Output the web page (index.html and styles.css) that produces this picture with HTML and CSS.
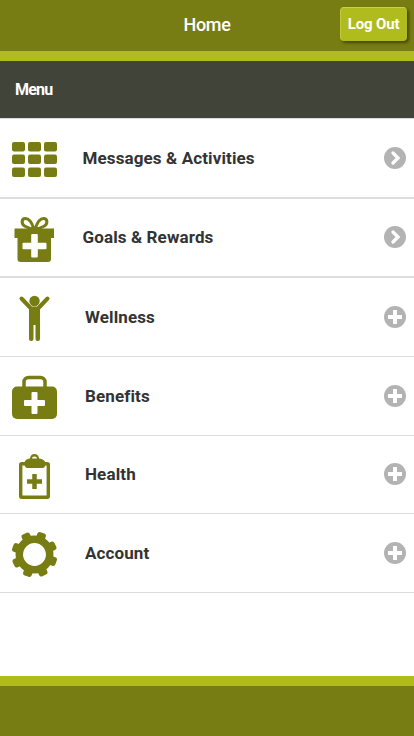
FILE: index.html
```html
<!DOCTYPE html>
<html lang="en">
<head>
<meta charset="utf-8">
<title>Home</title>
<link rel="stylesheet" href="styles.css">
</head>
<body>
<svg width="0" height="0" class="defs">
  <defs>
    <symbol id="go" viewBox="0 0 22 22"><circle cx="11" cy="11" r="11" fill="#b3b3b3"/><path d="M9 6l5 5-5 5" fill="none" stroke="#fff" stroke-width="3.300" stroke-linecap="round"/></symbol>
    <symbol id="expand" viewBox="0 0 22 22"><circle cx="11" cy="11" r="11" fill="#b3b3b3"/><path d="M11 4v14M4 11h14" stroke="#fff" stroke-width="4"/></symbol>
  </defs>
</svg>
<header class="top">
  <span></span>
  <h1>Home</h1>
  <button class="logout">Log Out</button>
</header>
<h2 class="menu-title">Menu</h2>
<main>
  <a class="row link first">
    <svg class="icon" viewBox="0 0 69 78"><g fill="#787d13"><rect x="12" y="23" width="13" height="9.5" rx="2"/><rect x="28" y="23" width="13" height="9.5" rx="2"/><rect x="44" y="23" width="13" height="9.5" rx="2"/><rect x="12" y="35.5" width="13" height="9.5" rx="2"/><rect x="28" y="35.5" width="13" height="9.5" rx="2"/><rect x="44" y="35.5" width="13" height="9.5" rx="2"/><rect x="12" y="48.5" width="13" height="9.5" rx="2"/><rect x="28" y="48.5" width="13" height="9.5" rx="2"/><rect x="44" y="48.5" width="13" height="9.5" rx="2"/></g></svg>
    <span class="label">Messages &amp; Activities</span>
    <svg class="mark"><use href="#go"/></svg>
  </a>
  <a class="row link">
    <svg class="icon" viewBox="0 0 69 77"><path d="M14.500 29.500h39.500v9.500h-3v21a3 3 0 0 1-3 3H20.500a3 3 0 0 1-3-3V39h-3z" fill="#787d13"/><path d="M34 30C32 24 29 19.500 25.500 19.500c-4.500 0-4.500 6 0 8 3 1.500 6 2.500 8.500 2.500zM35 30c2-6 5-10.500 8.500-10.500 4.500 0 4.500 6 0 8-3 1.500-6 2.500-8.500 2.500z" fill="none" stroke="#787d13" stroke-width="3"/><g fill="#fff"><rect x="31.200" y="35" width="6.600" height="23.500" rx="1"/><rect x="22.500" y="43.700" width="24" height="6.600" rx="1"/></g></svg>
    <span class="label odd">Goals &amp; Rewards</span>
    <svg class="mark odd"><use href="#go"/></svg>
  </a>
  <a class="row">
    <svg class="icon" viewBox="0 0 69 78"><circle cx="34.500" cy="23" r="5.200" fill="#787d13"/><path d="M21.500 20.500L31 30.500h7L47.500 20.500" fill="none" stroke="#787d13" stroke-width="4" stroke-linecap="round" stroke-linejoin="round"/><path d="M29 29h11v32a2 2 0 0 1-2 2h-.5a2 2 0 0 1-2-2V47h-2v14a2 2 0 0 1-2 2H31a2 2 0 0 1-2-2z" fill="#787d13"/></svg>
    <span class="label">Wellness</span>
    <svg class="mark"><use href="#expand"/></svg>
  </a>
  <a class="row">
    <svg class="icon" viewBox="0 0 69 78"><rect x="12" y="29.500" width="45" height="32.500" rx="5" fill="#787d13"/><path d="M24 31v-6a4.500 4.500 0 0 1 4.500-4.500h12a4.500 4.500 0 0 1 4.500 4.500V31" fill="none" stroke="#787d13" stroke-width="3.500"/><g fill="#fff"><rect x="31.500" y="35" width="6" height="22" rx="1"/><rect x="24" y="43" width="21" height="6" rx="1"/></g></svg>
    <span class="label">Benefits</span>
    <svg class="mark"><use href="#expand"/></svg>
  </a>
  <a class="row short">
    <svg class="icon" viewBox="0 0 69 77"><rect x="20.700" y="27.700" width="27.600" height="33.600" rx="1" fill="none" stroke="#787d13" stroke-width="3.400"/><path d="M24.500 28c0-4 2-5 5.500-5.500 0-2.500 2-4.500 4.500-4.500s4.500 2 4.500 4.500c3.500.5 6.500 1.500 6.500 5.500 0 2-1 4-3 4H27.500c-2 0-3-2-3-4z" fill="#787d13"/><path d="M32 22.500a2.500 2 0 0 1 5 0z" fill="#fff"/><path d="M34.500 38v15M27 45.500h15" stroke="#787d13" stroke-width="4.500"/></svg>
    <span class="label odd">Health</span>
    <svg class="mark odd"><use href="#expand"/></svg>
  </a>
  <a class="row">
    <svg class="icon" viewBox="0 0 69 78"><g transform="translate(34.500 40.500)"><circle r="15.200" fill="none" stroke="#787d13" stroke-width="7.500"/><g fill="#787d13" transform="rotate(20)"><rect x="-4.500" y="-23" width="9" height="46" rx="2.500" id="tooth" mask="url(#hub)"/><use href="#tooth" transform="rotate(45)"/><use href="#tooth" transform="rotate(90)"/><use href="#tooth" transform="rotate(135)"/></g></g><mask id="hub" maskUnits="userSpaceOnUse" x="-24" y="-24" width="48" height="48"><rect x="-24" y="-24" width="48" height="48" fill="#fff"/><circle r="12" fill="#000"/></mask></svg>
    <span class="label">Account</span>
    <svg class="mark"><use href="#expand"/></svg>
  </a>
</main>
<footer></footer>
</body>
</html>
```

FILE: styles.css
```css
* { box-sizing: border-box; }
body {
  margin: 0;
  height: 736px;
  display: flex;
  flex-direction: column;
  background: #fff;
  color: #333;
  font-family: Roboto, "Liberation Sans", sans-serif;
  overflow: hidden;
}
.defs { position: absolute; }
.top {
  height: 61px;
  flex: none;
  display: grid;
  grid-template-columns: 1fr auto 1fr;
  align-items: start;
  background: #787d13;
  border-bottom: 10px solid #b0bb1e;
  color: #fff;
}
h1 {
  margin: 0;
  font-size: 18px;
  line-height: 50px;
  font-weight: 500;
  letter-spacing: -0.3px;
}
.logout {
  justify-self: end;
  width: 67px;
  height: 34px;
  margin: 7px 7px 0 0;
  padding: 0;
  border: 1px solid #b0bb1e;
  border-top-color: #c9d14c;
  border-left-color: #c0c93a;
  border-radius: 4px;
  background: #b0bb1e;
  box-shadow: 2px 2px 3px #454a05;
  color: #fff;
  font: 700 15px Roboto, "Liberation Sans", sans-serif;
  letter-spacing: -0.15px;
}
.menu-title {
  flex: none;
  margin: 0;
  height: 57px;
  padding-left: 15px;
  background: #404439;
  color: #fff;
  font-size: 16px;
  line-height: 57px;
  font-weight: 700;
  letter-spacing: -0.8px;
}
.row {
  display: flex;
  align-items: center;
  height: 79px;
  border-bottom: 1px solid #ddd;
}
.link { border-bottom-width: 2px; }
.first { height: 81px; border-top: 1px solid #ddd; }
.short { height: 78px; }
.icon { width: 69px; height: 100%; flex: none; }
.label {
  flex: 1;
  padding-left: 16px;
  font-size: 17px;
  font-weight: 700;
  letter-spacing: 0.12px;
}
.link .label { padding-left: 13.5px; }
.mark { width: 22px; height: 22px; margin-right: 8px; }
.odd { margin-bottom: 1px; }
footer {
  flex: none;
  height: 60px;
  margin-top: auto;
  background: #787d13;
  border-top: 10px solid #b0bb1e;
}
```
